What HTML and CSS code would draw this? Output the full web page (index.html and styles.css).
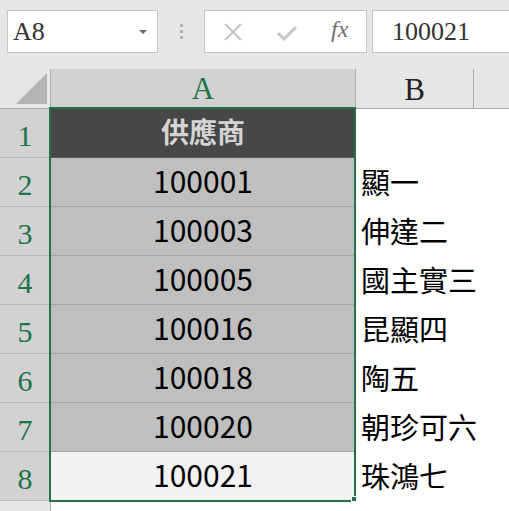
FILE: index.html
```html
<!DOCTYPE html>
<html>
<head>
<meta charset="utf-8">
<link rel="stylesheet" href="styles.css">
</head>
<body>
<div class="toolbar">
  <div class="namebox">
    <span class="name">A8</span>
    <svg class="caret" width="8" height="4" viewBox="0 0 8 4"><path d="M0 0h8L4 4z" fill="#666"/></svg>
  </div>
  <div class="grip"><i></i><i></i><i></i></div>
  <div class="fbuttons">
    <svg class="btn-x" width="20" height="20" viewBox="0 0 20 20"><path d="M2 2L18 18M18 2L2 18" stroke="#c6c6c6" stroke-width="2.2" fill="none"/></svg>
    <svg class="btn-ok" width="22" height="18" viewBox="0 0 22 18"><path d="M2 9l6 6L20 3" stroke="#c6c6c6" stroke-width="3" fill="none"/></svg>
    <span class="fx">fx</span>
  </div>
  <div class="finput">100021</div>
</div>
<div class="sheet">
  <div class="corner"><div class="tri"></div></div>
  <div class="colhead sel">A</div>
  <div class="colhead">B</div>
  <div class="colhead last"></div>

  <div class="rowhead">1</div><div class="ca head">供應商</div><div class="cb"></div><div class="cc"></div>
  <div class="rowhead">2</div><div class="ca">100001</div><div class="cb">顯一</div><div class="cc"></div>
  <div class="rowhead">3</div><div class="ca">100003</div><div class="cb">伸達二</div><div class="cc"></div>
  <div class="rowhead">4</div><div class="ca">100005</div><div class="cb">國主實三</div><div class="cc"></div>
  <div class="rowhead">5</div><div class="ca">100016</div><div class="cb">昆顯四</div><div class="cc"></div>
  <div class="rowhead">6</div><div class="ca">100018</div><div class="cb">陶五</div><div class="cc"></div>
  <div class="rowhead">7</div><div class="ca">100020</div><div class="cb">朝珍可六</div><div class="cc"></div>
  <div class="rowhead">8</div><div class="ca light">100021</div><div class="cb">珠鴻七</div><div class="cc"></div>
  <div class="rowhead plain"></div><div class="ca blank"></div><div class="cb"></div><div class="cc"></div>

  <div class="selection"></div>
  <div class="handle"></div>
</div>
</body>
</html>
```
FILE: styles.css
```css
html, body {
  margin: 0;
  padding: 0;
  background: #ffffff;
  width: 509px;
  height: 511px;
  overflow: hidden;
}

.toolbar {
  height: 69px;
  background: #e6e6e6;
  display: flex;
  align-items: flex-start;
  padding-top: 10px;
  box-sizing: border-box;
  white-space: nowrap;
}

.namebox {
  margin-left: 7px;
  width: 151px;
  height: 43px;
  box-sizing: border-box;
  background: #fff;
  border: 1px solid #c6c6c6;
  display: flex;
  align-items: center;
  justify-content: space-between;
  padding: 0 10px 0 5px;
}

.name {
  font-family: "Liberation Serif", serif;
  font-size: 26px;
  color: #333;
}

.grip {
  width: 46px;
  height: 43px;
  display: flex;
  flex-direction: column;
  align-items: center;
  justify-content: center;
  gap: 3px;
}

.grip i {
  display: block;
  width: 3px;
  height: 3px;
  background: #b0b0b0;
}

.fbuttons {
  width: 163px;
  height: 43px;
  box-sizing: border-box;
  background: #fff;
  border: 1px solid #c6c6c6;
  display: flex;
  align-items: center;
  padding-left: 18px;
}

.btn-x { margin-right: 33px; }
.btn-ok { margin-right: 33px; margin-top: 2px; }

.fx {
  font-family: "Liberation Serif", serif;
  font-style: italic;
  font-size: 24px;
  color: #707070;
  margin-top: -4px;
}

.finput {
  margin-left: 5px;
  flex: 1;
  height: 43px;
  box-sizing: border-box;
  background: #fff;
  border: 1px solid #c6c6c6;
  border-right: none;
  padding-left: 19px;
  font-family: "Liberation Serif", serif;
  font-size: 26px;
  color: #333;
  line-height: 41px;
}

.sheet {
  position: relative;
  display: grid;
  grid-template-columns: 51px 305px 118px 1fr;
  grid-template-rows: 40px repeat(8, 49px) 10px;
  overflow: hidden;
}

.sheet > div {
  box-sizing: border-box;
  min-width: 0;
}

.corner {
  background: #e6e6e6;
  border-right: 1px solid #ababab;
  border-bottom: 1px solid #ababab;
  position: relative;
}

.tri {
  position: absolute;
  right: 3px;
  bottom: 4px;
  width: 0;
  height: 0;
  border-left: 31px solid transparent;
  border-bottom: 31px solid #b4b4b4;
}

.colhead {
  background: #e6e6e6;
  border-right: 1px solid #ababab;
  border-bottom: 1px solid #ababab;
  font-family: "Liberation Serif", serif;
  font-size: 31px;
  color: #222;
  display: flex;
  align-items: center;
  justify-content: center;
  padding-top: 2px;
}

.colhead.sel {
  background: #d2d2d2;
  color: #217346;
  border-bottom: 2px solid #217346;
}

.colhead.last {
  border-right: none;
}

.rowhead {
  background: #d2d2d2;
  border-right: 1px solid #ababab;
  border-bottom: 1px solid #bcbcbc;
  font-family: "Liberation Serif", serif;
  font-size: 30px;
  color: #217346;
  display: flex;
  align-items: center;
  justify-content: center;
  padding-top: 6px;
}

.rowhead.plain {
  background: #e6e6e6;
  border-bottom: none;
}

.ca {
  background: #bfbfbf;
  border-bottom: 1px solid #a6a6a6;
  border-right: 1px solid #a6a6a6;
  font-family: "Noto Sans CJK TC", "Noto Sans", sans-serif;
  font-size: 30px;
  color: #000;
  display: flex;
  align-items: center;
  justify-content: center;
  padding-bottom: 5px;
}

.ca.head {
  background: #474747;
  color: #d4d4d4;
  font-size: 28px;
  font-weight: 700;
  border-bottom-color: #5a5a5a;
}

.ca.light {
  background: #f2f2f2;
}

.ca.blank {
  background: #fff;
  border: none;
}

.cb {
  font-family: "Noto Sans CJK TC", "Noto Sans", sans-serif;
  font-size: 29px;
  color: #000;
  display: flex;
  align-items: center;
  padding-left: 5px;
  padding-bottom: 4px;
  white-space: nowrap;
  overflow: visible;
}

.selection {
  position: absolute;
  left: 49px;
  top: 38px;
  width: 307px;
  height: 395px;
  border: 2px solid #217346;
  box-sizing: border-box;
}

.handle {
  position: absolute;
  left: 352px;
  top: 428px;
  width: 6px;
  height: 6px;
  background: #217346;
  border: 1px solid #fff;
  box-sizing: content-box;
  margin: -1px 0 0 -1px;
}
```
